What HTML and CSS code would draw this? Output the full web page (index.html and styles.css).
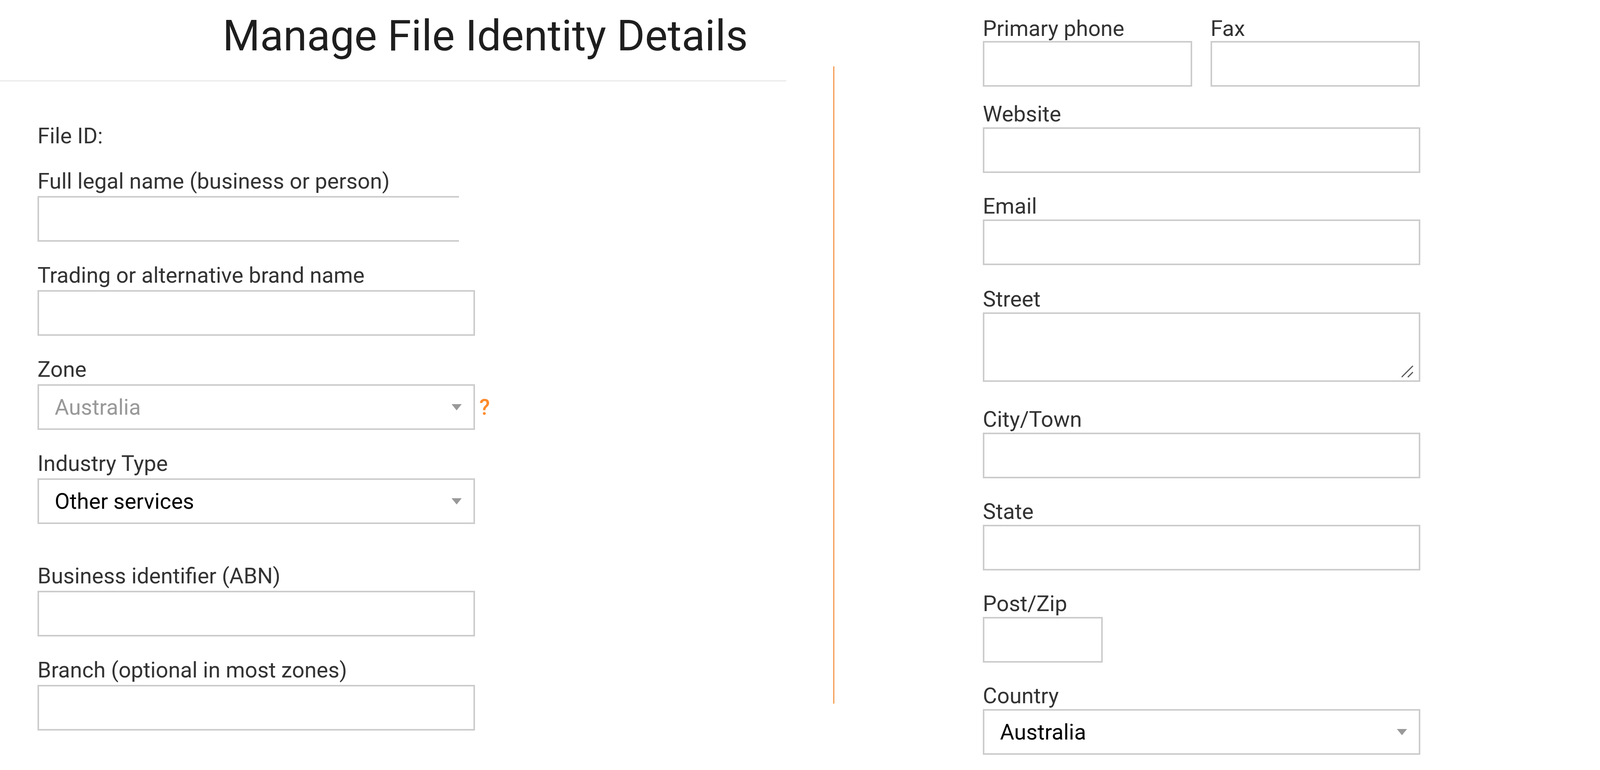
FILE: index.html
```html
<!DOCTYPE html>
<html lang="en">
<head>
<meta charset="utf-8">
<title>Manage File Identity Details</title>
<link rel="stylesheet" href="styles.css">
</head>
<body>
<div class="page">
  <section class="left">
    <header class="head">
      <h1 class="title">Manage File Identity Details</h1>
    </header>
    <div class="form form-left">
      <div class="file-id">File ID:</div>

      <div class="group">
        <label class="label">Full legal name (business or person)</label>
        <input class="field field-cut" type="text">
      </div>

      <div class="group">
        <label class="label">Trading or alternative brand name</label>
        <input class="field" type="text">
      </div>

      <div class="group">
        <label class="label">Zone</label>
        <div class="select-row">
          <div class="select select-muted">
            <span class="select-text">Australia</span>
            <svg class="caret" width="26" height="16" viewBox="0 0 26 16"><polygon points="0,0 26,0 13,16" fill="#999"/></svg>
          </div>
          <span class="help">?</span>
        </div>
      </div>

      <div class="group group-wide">
        <label class="label">Industry Type</label>
        <div class="select">
          <span class="select-text">Other services</span>
          <svg class="caret" width="26" height="16" viewBox="0 0 26 16"><polygon points="0,0 26,0 13,16" fill="#999"/></svg>
        </div>
      </div>

      <div class="group">
        <label class="label">Business identifier (ABN)</label>
        <input class="field" type="text">
      </div>

      <div class="group">
        <label class="label">Branch (optional in most zones)</label>
        <input class="field" type="text">
      </div>
    </div>
  </section>

  <div class="divider"></div>

  <section class="right form">
    <div class="phone-row">
      <div class="phone-field">
        <label class="label label-tight">Primary phone</label>
        <input class="field" type="text">
      </div>
      <div class="phone-field">
        <label class="label label-tight">Fax</label>
        <input class="field" type="text">
      </div>
    </div>

    <div class="rgroup">
      <label class="label rlabel">Website</label>
      <input class="field" type="text">
    </div>

    <div class="rgroup rgroup-plus">
      <label class="label rlabel">Email</label>
      <input class="field" type="text">
    </div>

    <div class="rgroup rgroup-area">
      <label class="label rlabel">Street</label>
      <div class="area-wrap">
        <textarea class="area"></textarea>
        <svg class="grip" width="44" height="40" viewBox="0 0 44 40">
          <line x1="0" y1="32" x2="29" y2="3" stroke="#555" stroke-width="3"/>
          <line x1="16" y1="32" x2="29" y2="19" stroke="#555" stroke-width="3"/>
        </svg>
      </div>
    </div>

    <div class="rgroup">
      <label class="label rlabel">City/Town</label>
      <input class="field" type="text">
    </div>

    <div class="rgroup">
      <label class="label rlabel">State</label>
      <input class="field" type="text">
    </div>

    <div class="rgroup">
      <label class="label rlabel">Post/Zip</label>
      <input class="field field-zip" type="text">
    </div>

    <div class="rgroup">
      <label class="label rlabel">Country</label>
      <div class="select">
        <span class="select-text">Australia</span>
        <svg class="caret" width="26" height="16" viewBox="0 0 26 16"><polygon points="0,0 26,0 13,16" fill="#999"/></svg>
      </div>
    </div>
  </section>
</div>
</body>
</html>
```
FILE: styles.css
```css
* {
  box-sizing: border-box;
}

html, body {
  margin: 0;
  padding: 0;
  background: #ffffff;
}

body {
  font-family: Roboto, "Liberation Sans", Arial, sans-serif;
  color: #333333;
  width: 4294px;
  height: 1972px;
  overflow: hidden;
}

.page {
  display: flex;
  align-items: flex-start;
}

.left {
  width: 2013px;
  flex: none;
}

.head {
  padding: 27px 0 48px 570px;
  border-bottom: 4px solid #eeeeee;
}

.title {
  margin: 0;
  font-size: 109.6px;
  line-height: 130px;
  font-weight: 400;
  color: #1e1e1e;
  white-space: nowrap;
}

.form-left {
  padding: 103px 0 0 96px;
}

.file-id {
  font-size: 56px;
  line-height: 72px;
  margin-bottom: 44px;
}

.label {
  display: block;
  font-size: 56px;
  line-height: 72px;
  margin-bottom: 2px;
  color: #333333;
  white-space: nowrap;
}

.group {
  margin-bottom: 50px;
  width: 1120px;
}

.group-wide {
  margin-bottom: 97px;
}

.field {
  display: block;
  width: 100%;
  height: 117px;
  margin: 0;
  padding: 0 40px;
  border: 4px solid #cccccc;
  border-radius: 0;
  background: #ffffff;
  font-family: inherit;
  font-size: 56px;
  color: #000000;
  outline: none;
}

.field-cut {
  width: 1079px;
  border-right: none;
}

.select-row {
  display: flex;
  align-items: center;
  width: 1200px;
}

.select {
  display: flex;
  align-items: center;
  justify-content: space-between;
  width: 1120px;
  height: 117px;
  padding: 0 30px 0 40px;
  border: 4px solid #cccccc;
  background: #ffffff;
  flex: none;
}

.select-text {
  font-size: 56px;
  line-height: 66px;
  color: #000000;
  white-space: nowrap;
}

.select-muted .select-text {
  color: #999999;
}

.caret {
  display: block;
  flex: none;
}

.help {
  margin-left: 11px;
  font-size: 56px;
  line-height: 66px;
  font-weight: 500;
  color: #ff8a2b;
}

.divider {
  flex: none;
  width: 3px;
  height: 1632px;
  margin: 170px 0 0 120px;
  background: #f39a4f;
}

.right {
  flex: none;
  width: 1120px;
  margin-left: 380px;
  padding-top: 41px;
}

.phone-row {
  display: flex;
  gap: 47px;
  margin-bottom: 36px;
}

.phone-field {
  width: 536px;
}

.label-tight {
  line-height: 64px;
  margin-bottom: 0;
}

.rlabel {
  line-height: 68px;
  margin-bottom: 0;
}

.rgroup {
  margin-bottom: 51px;
}

.rgroup-plus {
  margin-bottom: 53px;
}

.rgroup-area {
  margin-bottom: 62px;
}

.area-wrap {
  position: relative;
  height: 178px;
}

.area {
  display: block;
  width: 100%;
  height: 178px;
  margin: 0;
  padding: 20px 40px;
  border: 4px solid #cccccc;
  border-radius: 0;
  background: #ffffff;
  resize: none;
  outline: none;
  font-family: inherit;
  font-size: 56px;
}

.grip {
  position: absolute;
  right: 4px;
  bottom: 4px;
}

.field-zip {
  width: 307px;
}
```
